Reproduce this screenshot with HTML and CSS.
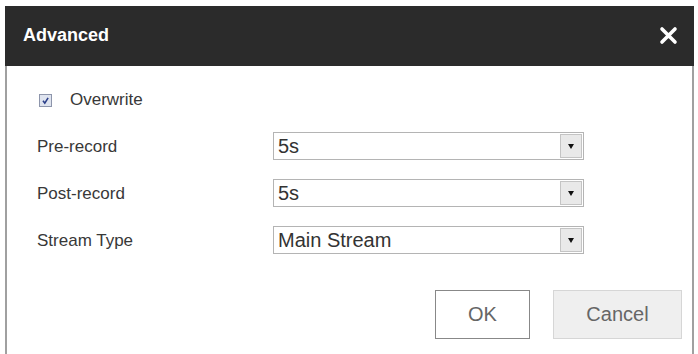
FILE: index.html
```html
<!DOCTYPE html>
<html lang="en">
<head>
    <meta charset="UTF-8">
    <title>Advanced</title>
    <link rel="stylesheet" href="styles.css">
</head>
<body>
    <!-- Dialog -->
    <div class="dialog">
        <div class="dialog-header">
            <span class="dialog-title">Advanced</span>
            <span class="close">
                <svg width="19" height="19" viewBox="0 0 19 19">
                    <path d="M3 3 L16 16 M16 3 L3 16" stroke="#fff" stroke-width="3.6" stroke-linecap="round"/>
                </svg>
            </span>
        </div>

        <div class="dialog-body">
            <div class="check-row">
                <span class="checkbox">
                    <svg width="11" height="11" viewBox="0 0 11 11">
                        <path d="M3 5.8 L4.8 8.2 L8.1 2.8" fill="none" stroke="#2c3f8a" stroke-width="1.6"/>
                    </svg>
                </span>
                <span>Overwrite</span>
            </div>

            <div class="form-row">
                <label>Pre-record</label>
                <div class="select">
                    <span class="select-value">5s</span>
                    <span class="select-arrow"></span>
                </div>
            </div>

            <div class="form-row">
                <label>Post-record</label>
                <div class="select">
                    <span class="select-value">5s</span>
                    <span class="select-arrow"></span>
                </div>
            </div>

            <div class="form-row">
                <label>Stream Type</label>
                <div class="select">
                    <span class="select-value">Main Stream</span>
                    <span class="select-arrow"></span>
                </div>
            </div>

            <div class="buttons">
                <button class="btn btn-ok">OK</button>
                <button class="btn btn-cancel">Cancel</button>
            </div>
        </div>
    </div>
</body>
</html>
```

FILE: styles.css
```css
* {
    margin: 0;
    padding: 0;
    box-sizing: border-box;
    font-family: "Liberation Sans", Arial, sans-serif;
}

body {
    background-color: #fff;
    width: 698px;
    height: 354px;
    overflow: hidden;
}

/* Dialog */
.dialog {
    margin: 6px 4px 0 5px;
}

.dialog-header {
    height: 60px;
    background-color: #2b2b2b;
    display: flex;
    align-items: center;
    justify-content: space-between;
    padding: 0 16px 0 18px;
}

.dialog-title {
    color: #fff;
    font-size: 18px;
    font-weight: bold;
    margin-top: -2px;
}

.close {
    display: flex;
    margin-top: -2px;
}

.dialog-body {
    border-left: 2px solid #a0a0a0;
    border-right: 2px solid #a0a0a0;
    height: 300px;
    padding: 21px 10px 0 30px;
    color: #383838;
    font-size: 17px;
}

.check-row {
    height: 26px;
    display: flex;
    align-items: center;
    gap: 18px;
    padding-left: 2px;
}

.checkbox {
    width: 13px;
    height: 13px;
    border: 1px solid #8d95ab;
    background-color: #dfe4ef;
    display: flex;
}

.form-row {
    display: flex;
    align-items: center;
    height: 28px;
    margin-top: 19px;
}

.form-row label {
    width: 236px;
    padding-top: 2px;
}

.select {
    width: 311px;
    height: 28px;
    border: 1px solid #b4b4b4;
    display: flex;
    align-items: center;
    justify-content: space-between;
    padding-left: 4px;
    font-size: 20px;
    color: #333;
}

.select-arrow {
    width: 22px;
    height: 24px;
    margin-right: 1px;
    background-color: #e9e9e9;
    border: 1px solid #c4c4c4;
    position: relative;
}

.select-arrow::after {
    content: "";
    position: absolute;
    left: 7px;
    top: 9px;
    border-left: 3.5px solid transparent;
    border-right: 3.5px solid transparent;
    border-top: 5px solid #111;
}

.buttons {
    display: flex;
    justify-content: flex-end;
    gap: 23px;
    margin-top: 36px;
}

.btn {
    height: 49px;
    font-size: 20px;
    color: #666;
    background-color: #fff;
    border: 1px solid #888;
}

.btn-ok {
    width: 95px;
}

.btn-cancel {
    width: 129px;
    background-color: #efefef;
    border-color: #d6d6d6;
}
```
